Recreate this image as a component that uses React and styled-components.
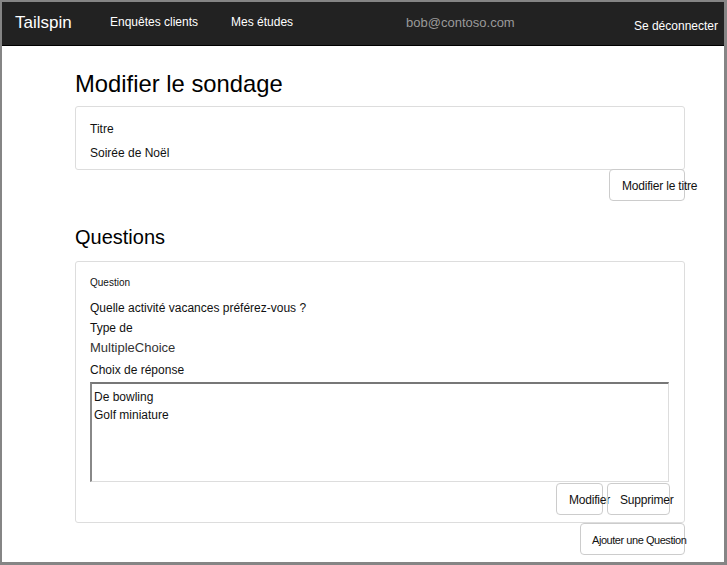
import React from 'react'
import styled, { createGlobalStyle } from 'styled-components'

const Global = createGlobalStyle`
  html, body { margin: 0; padding: 0; background: #fff; }
  body { font-family: "Liberation Sans", Arial, sans-serif; color: #111; }
  * { box-sizing: border-box; }
`

const Frame = styled.div`
  width: 727px;
  height: 565px;
  border-style: solid;
  border-color: #858585;
  border-width: 2px 3px 3px 2px;
  background: #fff;
  overflow: hidden;
`

const Nav = styled.div`
  height: 44px;
  background: #222;
  border-bottom: 1px solid #000;
  display: flex;
  align-items: center;
  padding: 0 6px 0 13px;
  color: #fff;
`

const Brand = styled.div`
  font-size: 17px;
  margin-top: -2px;
  width: 95px;
`

const NavLink = styled.div`
  font-size: 12px;
  margin-top: -4px;
  margin-right: ${p => p.gap}px;
`

const User = styled.div`
  font-size: 13px;
  color: #9a9a9a;
  margin-top: -2px;
  flex: 1;
`

const Logout = styled.div`
  font-size: 12px;
  margin-top: 4px;
`

const Content = styled.div`
  width: 610px;
  margin-left: 73px;
`

const Heading = styled.h1`
  font-weight: normal;
  font-size: ${p => p.size}px;
  line-height: 26px;
  margin: ${p => p.top}px 0 ${p => p.bottom}px;
  color: #000;
`

const Panel = styled.div`
  border: 1px solid #ddd;
  border-radius: 3px;
  padding: ${p => p.pad};
  height: ${p => p.h}px;
`

const Label = styled.div`
  font-size: ${p => p.size || 12}px;
  line-height: ${p => p.lh || 24}px;
  margin-top: ${p => p.top || 0}px;
  color: ${p => p.color || '#111'};
`

const Actions = styled.div`
  display: flex;
  justify-content: flex-end;
  gap: 4px;
  margin-top: ${p => p.top || 0}px;
  margin-right: ${p => p.right || 0}px;
`

const Button = styled.div`
  width: ${p => p.w}px;
  height: 32px;
  border: 1px solid #ccc;
  border-radius: 4px;
  background: transparent;
  font-size: ${p => p.size || 12}px;
  letter-spacing: ${p => p.ls || -0.2}px;
  line-height: 32px;
  padding-left: ${p => p.pl || 12}px;
  white-space: nowrap;
  overflow: visible;
  color: #111;
`

const ListBox = styled.div`
  height: 100px;
  margin-top: 1px;
  border-style: solid;
  border-width: 2px 1px 1px 2px;
  border-color: #777 #ddd #ddd #888;
  padding: 4px 2px;
  font-size: 12px;
  line-height: 18px;
`

export default function App() {
  return (
    <>
      <Global />
      <Frame>
        <Nav>
          <Brand>Tailspin</Brand>
          <NavLink gap={33}>Enquêtes clients</NavLink>
          <NavLink gap={113}>Mes études</NavLink>
          <User>bob@contoso.com</User>
          <Logout>Se déconnecter</Logout>
        </Nav>
        <Content>
          <Heading size={23.8} top={25} bottom={9}>Modifier le sondage</Heading>
          <Panel pad="10px 14px" h={64}>
            <Label>Titre</Label>
            <Label>Soirée de Noël</Label>
          </Panel>
          <Actions top={-1}>
            <Button w={76}>Modifier le titre</Button>
          </Actions>
          <Heading size={20} top={23} bottom={11}>Questions</Heading>
          <Panel pad="11px 15px 9px 14px" h={262}>
            <Label size={10} lh={20}>Question</Label>
            <Label lh={22} top={4}>Quelle activité vacances préférez-vous ?</Label>
            <Label lh={18}>Type de</Label>
            <Label size={13} lh={22} color="#333">MultipleChoice</Label>
            <Label lh={22}>Choix de réponse</Label>
            <ListBox>
              <div>De bowling</div>
              <div>Golf miniature</div>
            </ListBox>
            <Actions top={1} right={-1}>
              <Button w={47}>Modifier</Button>
              <Button w={63}>Supprimer</Button>
            </Actions>
          </Panel>
          <Actions>
            <Button w={105} size={11} pl={11} ls={-0.45}>Ajouter une Question</Button>
          </Actions>
        </Content>
      </Frame>
    </>
  )
}
